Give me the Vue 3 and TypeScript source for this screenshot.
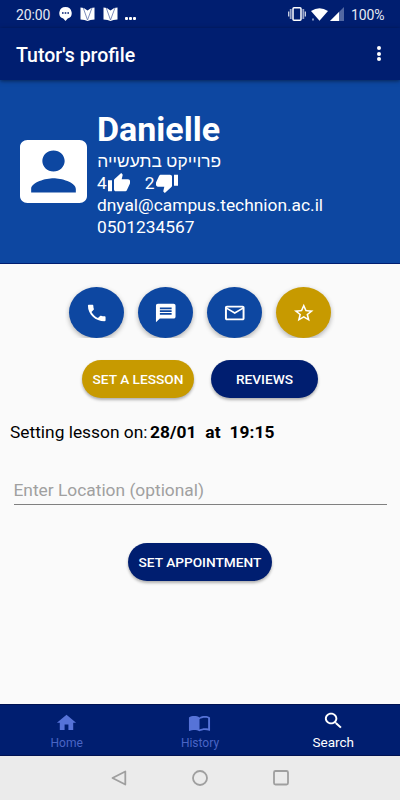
<script setup lang="ts">
import { ref } from 'vue'

interface Action { id: string; label: string; path: string; gold?: boolean }
interface Tab { id: string; label: string; path: string }

const actions: Action[] = [
  { id: 'call', label: 'Call', path: 'M6.62 10.79c1.44 2.83 3.76 5.14 6.59 6.59l2.2-2.2c.27-.27.67-.36 1.02-.24 1.12.37 2.33.57 3.57.57.55 0 1 .45 1 1V20c0 .55-.45 1-1 1-9.39 0-17-7.61-17-17 0-.55.45-1 1-1h3.5c.55 0 1 .45 1 1 0 1.25.2 2.45.57 3.57.11.35.03.74-.25 1.02l-2.2 2.2z' },
  { id: 'message', label: 'Message', path: 'M20 2H4c-1.1 0-1.99.9-1.99 2L2 22l4-4h14c1.1 0 2-.9 2-2V4c0-1.1-.9-2-2-2zm-2 12H6v-2h12v2zm0-3H6V9h12v2zm0-3H6V6h12v2z' },
  { id: 'mail', label: 'Email', path: 'M22 6c0-1.1-.9-2-2-2H4c-1.1 0-2 .9-2 2v12c0 1.1.9 2 2 2h16c1.1 0 2-.9 2-2V6zm-2 0l-8 5-8-5h16zm0 12H4V8l8 5 8-5v10z' },
  { id: 'star', label: 'Favorite', gold: true, path: 'M22 9.24l-7.19-.62L12 2 9.19 8.63 2 9.24l5.46 4.73L5.82 21 12 17.27 18.18 21l-1.63-7.03L22 9.24zM12 15.4l-3.76 2.27 1-4.28-3.32-2.88 4.38-.38L12 6.1l1.71 4.04 4.38.38-3.32 2.88 1 4.28L12 15.4z' },
]

const tabs: Tab[] = [
  { id: 'home', label: 'Home', path: 'M10 20v-6h4v6h5v-8h3L12 3 2 12h3v8z' },
  { id: 'history', label: 'History', path: 'M21 5c-1.11-.35-2.33-.5-3.5-.5-1.95 0-4.05.4-5.5 1.5-1.45-1.1-3.55-1.5-5.5-1.5S2.45 4.9 1 6v14.65c0 .25.25.5.5.5.1 0 .15-.05.25-.05C3.1 20.45 5.05 20 6.5 20c1.95 0 4.05.4 5.5 1.5 1.35-.85 3.8-1.5 5.5-1.5 1.65 0 3.35.3 4.75 1.05.1.05.15.05.25.05.25 0 .5-.25.5-.5V6c-.6-.45-1.25-.75-2-1zm0 13.5c-1.1-.35-2.3-.5-3.5-.5-1.7 0-4.15.65-5.5 1.5V8c1.35-.85 3.8-1.5 5.5-1.5 1.2 0 2.4.15 3.5.5v11.5z' },
  { id: 'search', label: 'Search', path: 'M15.5 14h-.79l-.28-.27C15.41 12.59 16 11.11 16 9.5 16 5.91 13.09 3 9.5 3S3 5.91 3 9.5 5.91 16 9.5 16c1.61 0 3.09-.59 4.23-1.57l.27.28v.79l5 4.99L20.49 19l-4.99-5zm-6 0C7.01 14 5 11.99 5 9.5S7.01 5 9.5 5 14 7.01 14 9.5 11.99 14 9.5 14z' },
]

const activeTab = ref('search')
const location = ref('')
</script>

<template>
  <div class="screen">
    <div class="status">
      <span class="clock">20:00</span>
      <svg class="chat" viewBox="0 0 13 14"><path d="M6.5 0a6.2 6 0 0 1 2.2 11.6L6.5 14l-2.2-2.4A6.2 6 0 0 1 6.5 0z" fill="#fff" /><path d="M3 5.3h1.6v1.4H3zM5.7 5.3h1.6v1.4H5.7zM8.4 5.3H10v1.4H8.4z" fill="#001e70" /></svg>
      <svg v-for="n in 2" :key="n" class="leaf" viewBox="0 0 15 14"><path d="M.5.5l3.3.5 3.7 2.6L11.2 1l3.3-.5v12l-4 .4-3 1-3-1-4-.4z" fill="#fff" /><path d="M3.3 1l4.2 12L12 .8" fill="none" stroke="#5c70a8" stroke-width=".8" /></svg>
      <span class="dots"><i /><i /><i /></span>
      <span class="grow" />
      <svg class="vibrate" viewBox="0 0 18 14"><rect x="5" y=".8" width="8" height="12.4" rx="1" fill="none" stroke="#fff" stroke-width="1.5" /><path d="M2.7 2v10M15.3 2v10" stroke="#98a5c8" stroke-width="1.8" /><path d="M.7 4.5v5M17.3 4.5v5" stroke="#dde2ee" stroke-width="1.2" /></svg>
      <svg class="wifi" viewBox="0 0 17 13"><path d="M0 3Q8.5-2.6 17 3L8.5 12.7z" fill="#fff" /><path d="M1 10.5h2v2H1z" fill="#8090bd" /></svg>
      <svg class="signal" viewBox="0 0 14 14"><path d="M14 0v14H0z" fill="#5268a2" /><path d="M9 5v9H0z" fill="#fff" /></svg>
      <span class="battery">100%</span>
    </div>

    <header class="appbar">
      <h1>Tutor's profile</h1>
      <button class="more" aria-label="More options"><i /><i /><i /></button>
    </header>

    <section class="profile">
      <svg class="avatar" viewBox="3 3 18 18" preserveAspectRatio="none"><path fill="#fff" d="M3 5v14c0 1.1.89 2 2 2h14c1.1 0 2-.9 2-2V5c0-1.1-.9-2-2-2H5c-1.11 0-2 .9-2 2zm12 4c0 1.66-1.34 3-3 3s-3-1.34-3-3 1.34-3 3-3 3 1.34 3 3zm-9 8c0-2 4-3.1 6-3.1s6 1.1 6 3.1v1H6v-1z" /></svg>
      <div class="info">
        <h2>Danielle</h2>
        <p class="course" dir="rtl">פרוייקט בתעשייה</p>
        <p class="votes">
          <span>4</span>
          <svg viewBox="0 0 24 24" preserveAspectRatio="none"><path d="M1 21h4V9H1v12zm22-11c0-1.1-.9-2-2-2h-6.31l.95-4.57.03-.32c0-.41-.17-.79-.44-1.06L14.17 1 7.59 7.59C7.22 7.95 7 8.45 7 9v10c0 1.1.9 2 2 2h9c.83 0 1.54-.5 1.84-1.22l3.02-7.05c.09-.23.14-.47.14-.73v-2z" /></svg>
          <span class="down">2</span>
          <svg viewBox="0 0 24 24" preserveAspectRatio="none"><path d="M15 3H6c-.83 0-1.54.5-1.84 1.22l-3.02 7.05c-.09.23-.14.47-.14.73v2c0 1.1.9 2 2 2h6.31l-.95 4.57-.03.32c0 .41.17.79.44 1.06L9.83 23l6.59-6.59c.36-.36.58-.86.58-1.41V5c0-1.1-.9-2-2-2zm4 0v12h4V3h-4z" /></svg>
        </p>
        <p class="mail">dnyal@campus.technion.ac.il</p>
        <p class="phone">0501234567</p>
      </div>
    </section>

    <main>
      <div class="actions">
        <span v-for="a in actions" :key="a.id" class="slot">
          <button class="round" :class="{ gold: a.gold }" :aria-label="a.label">
            <svg viewBox="0 0 24 24" preserveAspectRatio="none"><path :d="a.path" /></svg>
          </button>
        </span>
      </div>

      <div class="pills">
        <button class="pill gold lesson">SET A LESSON</button>
        <button class="pill reviews">REVIEWS</button>
      </div>

      <p class="when"><span>Setting lesson on:</span><b>28/01&nbsp; at&nbsp; 19:15</b></p>

      <input v-model="location" class="location" type="text" placeholder="Enter Location (optional)">

      <button class="pill appoint">SET APPOINTMENT</button>
    </main>

    <nav class="tabs">
      <button v-for="t in tabs" :key="t.id" class="tab" :class="{ active: activeTab === t.id }" @click="activeTab = t.id">
        <svg viewBox="0 0 24 24" preserveAspectRatio="none"><path :d="t.path" /></svg>
        <span>{{ t.label }}</span>
      </button>
    </nav>

    <div class="system">
      <svg viewBox="0 0 18 18"><path d="M15.3 2.5v13L2.5 9z" /></svg>
      <svg viewBox="0 0 18 18"><circle cx="9" cy="9" r="7" /></svg>
      <svg viewBox="0 0 18 18"><rect x="2" y="2" width="14" height="13.5" rx="1.5" /></svg>
    </div>
  </div>
</template>

<style>
body { margin: 0; background: #fafafa; }
</style>

<style scoped>
* { box-sizing: border-box; }
.screen { width: 400px; height: 800px; display: flex; flex-direction: column; background: #fafafa; font-family: Roboto, "Noto Sans", sans-serif; overflow: hidden; }
button { border: 0; padding: 0; margin: 0; font-family: inherit; background: none; }
h1, h2, p { margin: 0; }
svg { display: block; flex: none; }

.status { height: 28px; flex: none; background: #001e70; color: #e6e9f2; display: flex; align-items: center; padding: 0 16px; font-size: 14px; }
.clock { width: 43px; letter-spacing: -.1px; padding-top: 1px; }
.chat { width: 13px; height: 14px; margin-right: 8px; }
.leaf { width: 15px; height: 14px; margin-right: 7.5px; }
.dots { display: flex; gap: 1px; padding-top: 9px; }
.dots i { width: 3px; height: 3px; border-radius: 1px; background: #fff; }
.grow { flex: 1; }
.vibrate { width: 18px; height: 14px; margin-right: 5px; }
.wifi { width: 17px; height: 13px; margin-right: 2px; }
.signal { width: 14px; height: 14px; margin-right: 7px; }
.battery { width: 33px; white-space: nowrap; padding-top: 1px; letter-spacing: -.15px; }

.appbar { height: 52px; flex: none; background: #001e70; display: flex; align-items: center; justify-content: space-between; padding: 0 19px 0 16px; position: relative; box-shadow: 0 1px 4px rgba(0, 0, 0, .5); }
h1 { color: #fff; font-size: 19.5px; font-weight: 500; line-height: 24px; padding-top: 3px; }
.more { display: flex; flex-direction: column; gap: 1.5px; padding-bottom: 1px; }
.more i { width: 4px; height: 4px; border-radius: 50%; background: #fff; }

.profile { height: 184px; flex: none; background: #0d47a1; border-bottom: 1px solid #001e70; color: #fff; display: flex; padding: 30px 0 0 20px; }
.avatar { width: 67px; height: 63px; margin: 30px 10px 0 0; }
h2 { font-size: 34px; line-height: 38px; padding-bottom: 2px; font-weight: 700; }
.info p { font-size: 17.35px; line-height: 22px; height: 22px; white-space: nowrap; }
.info .course { width: 124px; }
.votes { display: flex; align-items: center; }
.votes svg { width: 24px; height: 22px; fill: #fff; }
.votes .down { margin-left: 14px; }

main { flex: 1; min-height: 0; display: flex; flex-direction: column; align-items: center; }
.actions { display: flex; gap: 6px; margin-top: 20px; height: 54px; }
.slot { width: 63px; height: 54px; display: flex; justify-content: center; padding-top: 3px; overflow: hidden; }
.round { width: 55px; height: 51px; border-radius: 50%; background: #0d47a1; display: grid; place-items: center; box-shadow: 0 2px 5px rgba(0, 0, 0, .3); }
.round svg { width: 23.5px; height: 22px; fill: #fff; }
.gold { background: #c79a00; }
.pills { display: flex; gap: 17px; margin-top: 22px; }
.pill { height: 38px; border-radius: 19px; color: #fff; background: #001e70; font-size: 13.7px; font-weight: 500; box-shadow: 0 2px 3px rgba(0, 0, 0, .3); }
.pill.gold { background: #c79a00; }
.lesson { width: 112px; }
.reviews { width: 107px; }
.when { align-self: flex-start; margin: 23px 0 0 10px; font-size: 17.35px; line-height: 22px; color: #000; display: flex; gap: 2.5px; white-space: pre; }
.when b { letter-spacing: .08px; }
.location { width: 373px; height: 36px; margin-top: 26px; border: 0; border-bottom: 1px solid #808080; padding: 6px 0 0; outline: 0; background: transparent; font: 17.35px Roboto, sans-serif; color: #000; }
.location::placeholder { color: #a0a0a0; opacity: 1; }
.appoint { width: 144px; margin-top: 38px; }

.tabs { height: 52px; flex: none; background: #001e70; border-top: 1px solid #001252; border-bottom: 1px solid #001252; display: flex; }
.tab { flex: 1; display: flex; flex-direction: column; align-items: center; color: #4a65c5; font-size: 12px; padding-top: 7px; }
.tab svg { width: 23px; height: 21.5px; fill: #5673d8; }
.tab span { line-height: 16px; margin-top: 1px; }
.tab.active { color: #fff; font-size: 13.5px; padding-top: 5px; }
.tab.active svg { fill: #fff; }
.tab.active span { margin-top: 2px; }

.system { height: 44px; flex: none; background: #ebebeb; display: flex; justify-content: center; gap: 63px; align-items: center; }
.system svg { width: 18px; height: 18px; fill: none; stroke: #9f9f9f; stroke-width: 1.8; stroke-linejoin: round; }
</style>
